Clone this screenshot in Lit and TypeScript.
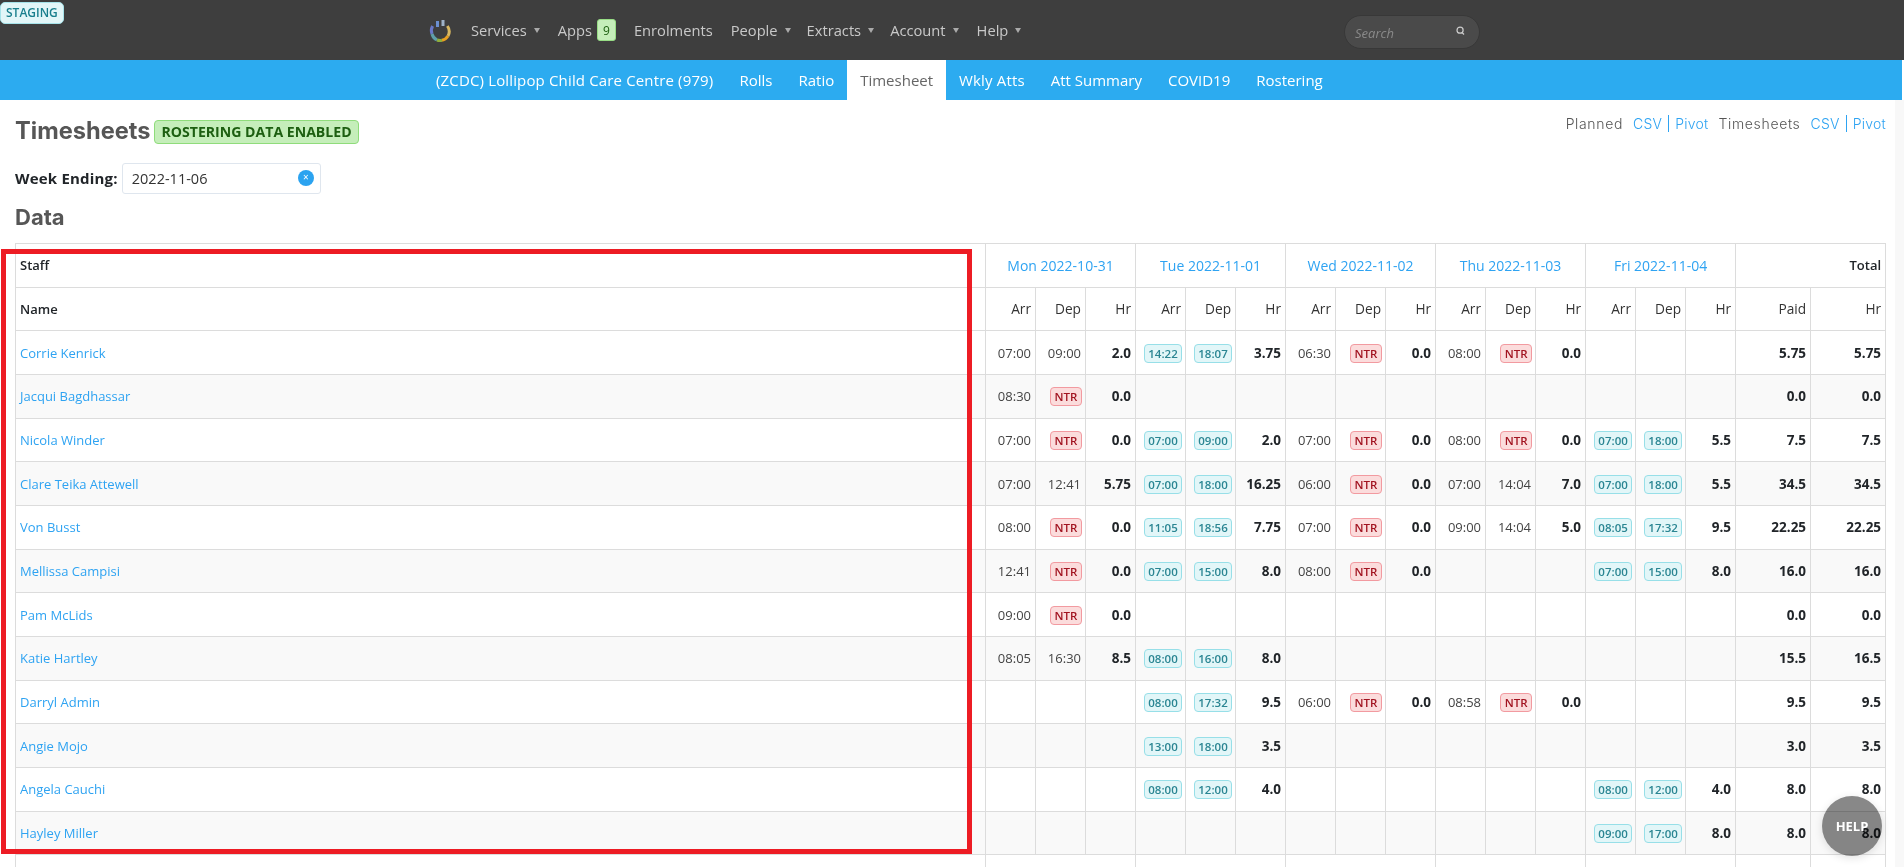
import { LitElement, html, css, nothing } from "lit";
import { customElement } from "lit/decorators.js";

type Cell = string | null;
interface Day { a: Cell; d: Cell; h: string; roster?: boolean }

const E: Day | null = null as any;
const d = (a: string, dep: string, h: string): Day => ({ a, d: dep, h });
const r = (a: string, dep: string, h: string): Day => ({ a, d: dep, h, roster: true });

const rows: { name: string; days: (Day | null)[]; paid: string; hr: string }[] = [
  { name: "Corrie Kenrick", days: [d("07:00", "09:00", "2.0"), r("14:22", "18:07", "3.75"), d("06:30", "NTR", "0.0"), d("08:00", "NTR", "0.0"), E], paid: "5.75", hr: "5.75" },
  { name: "Jacqui Bagdhassar", days: [d("08:30", "NTR", "0.0"), E, E, E, E], paid: "0.0", hr: "0.0" },
  { name: "Nicola Winder", days: [d("07:00", "NTR", "0.0"), r("07:00", "09:00", "2.0"), d("07:00", "NTR", "0.0"), d("08:00", "NTR", "0.0"), r("07:00", "18:00", "5.5")], paid: "7.5", hr: "7.5" },
  { name: "Clare Teika Attewell", days: [d("07:00", "12:41", "5.75"), r("07:00", "18:00", "16.25"), d("06:00", "NTR", "0.0"), d("07:00", "14:04", "7.0"), r("07:00", "18:00", "5.5")], paid: "34.5", hr: "34.5" },
  { name: "Von Busst", days: [d("08:00", "NTR", "0.0"), r("11:05", "18:56", "7.75"), d("07:00", "NTR", "0.0"), d("09:00", "14:04", "5.0"), r("08:05", "17:32", "9.5")], paid: "22.25", hr: "22.25" },
  { name: "Mellissa Campisi", days: [d("12:41", "NTR", "0.0"), r("07:00", "15:00", "8.0"), d("08:00", "NTR", "0.0"), E, r("07:00", "15:00", "8.0")], paid: "16.0", hr: "16.0" },
  { name: "Pam McLids", days: [d("09:00", "NTR", "0.0"), E, E, E, E], paid: "0.0", hr: "0.0" },
  { name: "Katie Hartley", days: [d("08:05", "16:30", "8.5"), r("08:00", "16:00", "8.0"), E, E, E], paid: "15.5", hr: "16.5" },
  { name: "Darryl Admin", days: [E, r("08:00", "17:32", "9.5"), d("06:00", "NTR", "0.0"), d("08:58", "NTR", "0.0"), E], paid: "9.5", hr: "9.5" },
  { name: "Angie Mojo", days: [E, r("13:00", "18:00", "3.5"), E, E, E], paid: "3.0", hr: "3.5" },
  { name: "Angela Cauchi", days: [E, r("08:00", "12:00", "4.0"), E, E, r("08:00", "12:00", "4.0")], paid: "8.0", hr: "8.0" },
  { name: "Hayley Miller", days: [E, E, E, E, r("09:00", "17:00", "8.0")], paid: "8.0", hr: "8.0" },
];
const dayNames = ["Mon 2022-10-31", "Tue 2022-11-01", "Wed 2022-11-02", "Thu 2022-11-03", "Fri 2022-11-04"];

@customElement("app-root")
export class AppRoot extends LitElement {
  static styles = css`
    :host { display: block; height: 867px; overflow: hidden; position: relative; background: #fff; font-family: "Open Sans", "Noto Sans", sans-serif; font-size: 13px; color: #212529; }
    .top { height: 60px; background: #3e3e3e; display: flex; align-items: center; position: relative; }
    .staging { position: absolute; left: 0; top: 2px; height: 22px; padding: 0 5px; box-sizing: border-box; background: #e2f6f8; border: 1px solid #a6e3ea; border-radius: 5px; color: #197f8d; font-size: 12px; font-weight: 600; line-height: 20px; }
    .menu { display: flex; align-items: center; margin-left: 428px; height: 60px; color: #c9c9c9; font-size: 14.7px; }
    .logo { width: 24px; height: 24px; margin-right: 19px; }
    .mi { margin-right: 18px; display: flex; align-items: center; white-space: nowrap; }
    .mi.gap { margin-right: 20px; }
    .caret { width: 0; height: 0; border-left: 3.5px solid transparent; border-right: 3.5px solid transparent; border-top: 5px solid #aaa; margin-left: 7px; margin-right: -2px; }
    .count { background: #c5eeba; border: 1px solid #97dd85; color: #1d5f11; font-size: 12px; border-radius: 3px; width: 19px; height: 22px; box-sizing: border-box; display: flex; align-items: center; justify-content: center; margin-left: 5px; }
    .search { position: absolute; left: 1344px; top: 15px; width: 136px; height: 34px; box-sizing: border-box; border-radius: 17px; background: #4a4a4a; border: 1px solid #383838; display: flex; align-items: center; padding-left: 10px; padding-top: 1px; color: #8a8a8a; font-size: 13px; font-style: italic; }
    .search svg { position: absolute; right: 12px; top: 8px; }
    .sub { height: 40px; background: #2cabf0; display: flex; justify-content: flex-start; padding-left: 423px; margin-right: 2px; color: #fff; font-size: 15px; }
    .tab { padding: 0 13px; line-height: 40px; white-space: nowrap; }
    .tab.wide { letter-spacing: .15px; }
    .tab.on { background: #fff; color: #666; }
    .head { display: flex; justify-content: space-between; padding: 0 18px 0 15px; height: 44px; align-items: flex-start; }
    h1 { font-family: "Inter", "Open Sans", sans-serif; font-size: 23.6px; font-weight: 700; color: #565656; margin: 17px 0 0; line-height: 28px; display: flex; align-items: flex-start; }
    .enabled { margin: 3px 0 0 4px; height: 24px; box-sizing: border-box; padding: 0 6px; background: #c5eeba; border: 1px solid #8fdc7b; border-radius: 4px; font-family: "Open Sans", sans-serif; font-size: 14.1px; line-height: 22px; font-weight: 700; color: #1d5f11; }
    .exports { margin-top: 15px; font-family: "Inter", sans-serif; font-weight: 300; font-size: 14px; letter-spacing: .25px; color: #555; display: flex; align-items: center; }
    .exports a { color: #2ea3f2; }
    .exports .sep { width: 1px; height: 17px; background: #2ea3f2; margin: 0 6px; }
    .exports .lbl { margin-left: 10px; margin-right: 10px; letter-spacing: .65px; }
    .exports .lbl.first { margin-left: 0; }
    .week { display: flex; align-items: center; padding-left: 15px; height: 30px; margin-top: 19px; }
    .week b { font-size: 15px; font-weight: 700; color: #212529; letter-spacing: .2px; }
    .field { margin-left: 4px; width: 199px; height: 31px; box-sizing: border-box; background: #fff; border: 1px solid #dfe6ee; border-radius: 3px; padding-left: 9px; display: flex; align-items: center; justify-content: space-between; font-size: 14.5px; color: #333; padding-right: 6px; }
    .clear { width: 16px; height: 16px; border-radius: 50%; background: #2ba3f0; color: #fff; font-size: 10px; line-height: 15px; text-align: center; }
    h2 { font-family: "Inter", "Open Sans", sans-serif; font-size: 22px; font-weight: 700; color: #565656; margin: 10px 0 0 15px; line-height: 28px; height: 40px; }
    table { border-collapse: collapse; table-layout: fixed; width: 1870px; margin-left: 15px; }
    td, th { border: 1px solid #dcdcdc; padding: 0 4px; font-weight: 400; text-align: right; font-size: 13px; height: 43.67px; box-sizing: border-box; overflow: hidden; white-space: nowrap; }
    thead tr:nth-child(2) th:not(.l) { font-size: 13.7px; color: #333; }
    .l { text-align: left; }
    th.hd { font-weight: 600; color: #212529; }
    td a { color: #2ea3f2; }
    th.day { text-align: center; color: #2ea3f2; font-size: 14px; }
    tbody tr:nth-child(even) td { background: #f9f9f9; }
    td.h { font-weight: 700; font-size: 13.5px; color: #212529; }
    .t { color: #444; }
    .pill { display: inline-block; width: 38px; height: 19px; margin-right: -1px; box-sizing: border-box; font-size: 11.5px; font-weight: 600; line-height: 17px; text-align: center; border-radius: 4px; vertical-align: middle; }
    .pill.ro { background: #e2f6f8; border: 1px solid #97dfe8; color: #2a8592; }
    .pill.ntr { width: 32px; background: #fbdcdc; border: 1px solid #f29aa0; color: #a11320; }
    .red { position: absolute; left: 1px; top: 249px; width: 971px; height: 605px; box-sizing: border-box; border: 5px solid #ed1c24; }
    .help { position: absolute; left: 1822px; top: 796px; width: 60px; height: 60px; color: #fff; font-weight: 700; font-size: 13px; line-height: 60px; text-align: center; }
    .disc { position: absolute; inset: 0; border-radius: 50%; background: #888; mix-blend-mode: multiply; box-shadow: 0 2px 8px rgba(0,0,0,.12); }
    .helpt { position: relative; }
    .bar { position: absolute; right: 0; top: 100px; bottom: 0; width: 9px; background: #f8f8f8; }
  `;

  private cellT(v: string | null) {
    if (v === null) return nothing;
    if (v === "NTR") return html`<span class="pill ntr">NTR</span>`;
    return html`<span class="t">${v}</span>`;
  }

  private day(x: Day | null) {
    if (!x) return html`<td></td><td></td><td></td>`;
    if (x.roster) {
      return html`<td><span class="pill ro">${x.a}</span></td><td><span class="pill ro">${x.d}</span></td><td class="h">${x.h}</td>`;
    }
    return html`<td>${this.cellT(x.a)}</td><td>${this.cellT(x.d)}</td><td class="h">${x.h}</td>`;
  }

  render() {
    const m = (t: string, caret = true, gap = false) => html`<span class="mi ${gap ? "gap" : ""}">${t}${caret ? html`<i class="caret"></i>` : nothing}</span>`;
    return html`
      <div class="top">
        <span class="staging">STAGING</span>
        <div class="menu">
          <svg class="logo" viewBox="0 0 24 24" fill="none" stroke-width="3" stroke-linecap="butt">
            <path d="M4.6 8 A 9.5 9.5 0 0 0 4 16" stroke="#6a78c8"/>
            <path d="M4 16 A 9.5 9.5 0 0 0 9 22" stroke="#5f9fa8"/>
            <path d="M9 22 A 9.5 9.5 0 0 0 14 22.3" stroke="#8fae3c"/>
            <path d="M14 22.3 A 9.5 9.5 0 0 0 20 18" stroke="#e8a020"/>
            <path d="M20 18 A 9.5 9.5 0 0 0 19.4 8" stroke="#d9b860"/>
            <path d="M9.5 3 V9" stroke="#6b8fd0"/>
            <path d="M15 2 V8" stroke="#9fb3c8"/>
          </svg>
          ${m("Services", true, true)}
          <span class="mi">Apps<span class="count">9</span></span>
          ${m("Enrolments", false)}${m("People")}${m("Extracts")}${m("Account", true, true)}${m("Help")}
        </div>
        <div class="search">Search
          <svg width="13" height="14" viewBox="0 0 14 16" fill="none" stroke="#ccc" stroke-width="1.4"><circle cx="6.5" cy="7" r="3.5"/><path d="M9 10 l2 2"/></svg>
        </div>
      </div>
      <div class="sub">
        <span class="tab wide">(ZCDC) Lollipop Child Care Centre (979)</span>
        <span class="tab">Rolls</span><span class="tab">Ratio</span><span class="tab on">Timesheet</span>
        <span class="tab wide">Wkly Atts</span><span class="tab">Att Summary</span><span class="tab">COVID19</span><span class="tab">Rostering</span>
      </div>
      <div class="head">
        <h1>Timesheets<span class="enabled">ROSTERING DATA ENABLED</span></h1>
        <div class="exports">
          <span class="lbl first">Planned</span><a>CSV</a><i class="sep"></i><a>Pivot</a>
          <span class="lbl">Timesheets</span><a>CSV</a><i class="sep"></i><a>Pivot</a>
        </div>
      </div>
      <div class="week"><b>Week Ending:</b><div class="field">2022-11-06<span class="clear">×</span></div></div>
      <h2>Data</h2>
      <table>
        <colgroup>
          <col style="width:970px" />
          ${dayNames.map(() => html`<col style="width:50px" /><col style="width:50px" /><col style="width:50px" />`)}
          <col style="width:75px" /><col style="width:75px" />
        </colgroup>
        <thead>
          <tr><th class="l hd">Staff</th>${dayNames.map((n) => html`<th class="day" colspan="3">${n}</th>`)}<th class="hd" colspan="2">Total</th></tr>
          <tr><th class="l hd">Name</th>${dayNames.map(() => html`<th>Arr</th><th>Dep</th><th>Hr</th>`)}<th>Paid</th><th>Hr</th></tr>
        </thead>
        <tbody>
          ${rows.map((x) => html`<tr><td class="l"><a>${x.name}</a></td>${x.days.map((y) => this.day(y))}<td class="h">${x.paid}</td><td class="h">${x.hr}</td></tr>`)}
          <tr><td></td>${dayNames.map(() => html`<td colspan="3"></td>`)}<td></td><td></td></tr>
        </tbody>
      </table>
      <div class="red"></div>
      <div class="help"><span class="disc"></span><span class="helpt">HELP</span></div>
      <div class="bar"></div>
    `;
  }
}
